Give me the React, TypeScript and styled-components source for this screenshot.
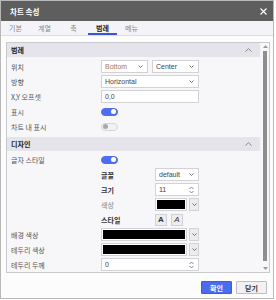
import React from 'react';
import styled, {createGlobalStyle} from 'styled-components';

const GlobalStyle = createGlobalStyle`
  html, body {
    margin: 0;
    padding: 0;
    background: #ffffff;
  }
  body {
    font-family: "Noto Sans CJK KR", "Noto Sans", "Liberation Sans", sans-serif;
    color: #333;
  }
  * {
    box-sizing: border-box;
  }
`;

const Dialog = styled.div`
  width: 274px;
  height: 299px;
  border: 1px solid #b8b8b8;
  background: #fcfcfd;
  display: flex;
  flex-direction: column;
  overflow: hidden;
`;

const TitleBar = styled.div`
  height: 20px;
  flex: none;
  background: #5e5e5e;
  color: #fff;
  display: flex;
  align-items: center;
  justify-content: space-between;
  padding: 0 6px 0 9px;
  font-size: 7.5px;
  font-weight: 700;
`;

const TabBar = styled.div`
  height: 15px;
  flex: none;
  display: flex;
  background: #f4f4f8;
  border-bottom: 1px solid #dcdce2;
`;

const Tab = styled.div<{ $active?: boolean }>`
  width: 29px;
  display: flex;
  align-items: center;
  justify-content: center;
  font-size: 7px;
  color: ${p => (p.$active ? '#222' : '#888')};
  font-weight: ${p => (p.$active ? 700 : 400)};
  border-bottom: 2px solid ${p => (p.$active ? '#3b54d6' : 'transparent')};
  padding-top: 1px;
`;

const Body = styled.div`
  flex: none;
  padding: 6px 0 0 5px;
`;

const Panel = styled.div`
  width: 264px;
  height: 231px;
  border: 1px solid #c9c9ce;
  background: #f7f7fa;
  display: flex;
`;

const ScrollArea = styled.div`
  flex: 1;
  overflow: hidden;
`;

const ScrollBar = styled.div`
  width: 9px;
  flex: none;
  display: flex;
  flex-direction: column;
  align-items: center;
  background: #f7f7fa;
  padding: 2px 0 2px 1px;
`;

const Thumb = styled.div`
  width: 4px;
  flex: 1;
  background: #8e8e8e;
  margin: 3px 0 6px;
`;

const SectionHeader = styled.div`
  height: 14px;
  background: #e4e4ea;
  display: flex;
  align-items: center;
  justify-content: space-between;
  padding: 0 8px 0 4px;
  font-size: 7px;
  font-weight: 700;
  color: #222;
`;

const SectionBody = styled.div<{ $top: number; $bottom: number }>`
  padding: ${p => p.$top}px 0 ${p => p.$bottom}px;
`;

const Row = styled.div`
  height: 15px;
  display: flex;
  align-items: center;
`;

const Label = styled.div<{ $muted?: boolean }>`
  width: 94px;
  flex: none;
  padding-left: 4px;
  font-size: 7px;
  color: ${p => (p.$muted ? '#999' : '#555')};
`;

const SubLabel = styled.div<{ $muted?: boolean }>`
  width: 54px;
  flex: none;
  font-size: 7px;
  font-weight: 700;
  color: ${p => (p.$muted ? '#aaa' : '#333')};
`;

const Controls = styled.div`
  display: flex;
  gap: 4px;
  align-items: center;
`;

const Field = styled.div<{ $w: number; $color?: string }>`
  width: ${p => p.$w}px;
  height: 13px;
  border: 1px solid #d2d2d6;
  background: #fff;
  display: flex;
  align-items: center;
  justify-content: space-between;
  padding: 0 4px 0 3px;
  font-size: 7px;
  color: ${p => p.$color || '#444'};
  font-family: "Liberation Sans", "Noto Sans CJK KR", sans-serif;
`;

const Toggle = styled.div<{ $on?: boolean }>`
  width: 17px;
  height: 8px;
  border-radius: 4px;
  background: ${p => (p.$on ? '#4f6df0' : '#f2f2f4')};
  border: 1px solid ${p => (p.$on ? '#4f6df0' : '#d6d6da')};
  display: flex;
  align-items: center;
  justify-content: ${p => (p.$on ? 'flex-end' : 'flex-start')};
  padding: 0 1px;
`;

const Knob = styled.div<{ $on?: boolean }>`
  width: 5px;
  height: 5px;
  border-radius: 50%;
  background: ${p => (p.$on ? '#fff' : '#a8a8ac')};
`;

const ColorPick = styled.div<{ $w: number }>`
  width: ${p => p.$w}px;
  height: 13px;
  display: flex;
  gap: 2px;
`;

const Swatch = styled.div`
  flex: 1;
  border: 1px solid #d2d2d6;
  background: #fff;
  padding: 1px;

  > div {
    height: 100%;
    background: #000;
  }
`;

const DropBtn = styled.div`
  width: 10px;
  border: 1px solid #d2d2d6;
  background: #ececef;
  display: flex;
  align-items: center;
  justify-content: center;
`;

const StyleBtn = styled.div<{ $italic?: boolean }>`
  width: 12px;
  height: 12px;
  border: 1px solid #d2d2d6;
  background: #ededf0;
  display: flex;
  align-items: center;
  justify-content: center;
  font-family: "Liberation Sans", sans-serif;
  font-size: 8px;
  font-weight: ${p => (p.$italic ? 400 : 700)};
  font-style: ${p => (p.$italic ? 'italic' : 'normal')};
  color: #333;
`;

const Footer = styled.div`
  flex: 1;
  display: flex;
  justify-content: flex-end;
  align-items: flex-start;
  gap: 4px;
  padding: 8px 6px 0 0;
`;

const Button = styled.div<{ $primary?: boolean }>`
  width: 31px;
  height: 13px;
  display: flex;
  align-items: center;
  justify-content: center;
  font-size: 7px;
  font-weight: 700;
  color: ${p => (p.$primary ? '#fff' : '#333')};
  background: ${p => (p.$primary ? '#4a6cf0' : '#f1f1f3')};
  border: 1px solid ${p => (p.$primary ? '#3c5ce0' : '#bdbdc2')};
  border-radius: 1px;
`;

const Chevron = () => (
  <svg width="5" height="3" viewBox="0 0 5 3">
    <path d="M0.5 0.5 L2.5 2.5 L4.5 0.5" fill="none" stroke="#666" strokeWidth="0.9"/>
  </svg>
);

const Spinner = () => (
  <svg width="5" height="8" viewBox="0 0 5 8">
    <path d="M0.5 3 L2.5 1 L4.5 3 M0.5 5 L2.5 7 L4.5 5" fill="none" stroke="#666" strokeWidth="0.8"/>
  </svg>
);

const CollapseIcon = () => (
  <svg width="7" height="4" viewBox="0 0 7 4">
    <path d="M0.5 3.5 L3.5 0.7 L6.5 3.5" fill="none" stroke="#888" strokeWidth="1"/>
  </svg>
);

const CloseIcon = () => (
  <svg width="7" height="7" viewBox="0 0 7 7">
    <path d="M0.5 0.5 L6.5 6.5 M6.5 0.5 L0.5 6.5" stroke="#fff" strokeWidth="1.2"/>
  </svg>
);

const Arrow = ({up}: { up?: boolean }) => (
  <svg width="5" height="3" viewBox="0 0 5 3">
    <path d={up ? 'M0 3 L2.5 0 L5 3 Z' : 'M0 0 L2.5 3 L5 0 Z'} fill="#999"/>
  </svg>
);

const tabs = ['기본', '계열', '축', '범례', '메뉴'];

function ColorField({w}: { w: number }) {
  return (
    <ColorPick $w={w}>
      <Swatch><div/></Swatch>
      <DropBtn><Chevron/></DropBtn>
    </ColorPick>
  );
}

export default function App() {
  return (
    <>
      <GlobalStyle/>
      <Dialog>
        <TitleBar>
          <span>차트 속성</span>
          <CloseIcon/>
        </TitleBar>
        <TabBar>
          {tabs.map(t => <Tab key={t} $active={t === '범례'}>{t}</Tab>)}
        </TabBar>
        <Body>
          <Panel>
            <ScrollArea>
              <SectionHeader>
                <span>범례</span>
                <CollapseIcon/>
              </SectionHeader>
              <SectionBody $top={2} $bottom={3}>
                <Row>
                  <Label>위치</Label>
                  <Controls>
                    <Field $w={47} $color="#a87a48">Bottom<Chevron/></Field>
                    <Field $w={47}>Center<Chevron/></Field>
                  </Controls>
                </Row>
                <Row>
                  <Label>방향</Label>
                  <Field $w={98}>Horizontal<Chevron/></Field>
                </Row>
                <Row>
                  <Label>X,Y 오프셋</Label>
                  <Field $w={98}>0,0</Field>
                </Row>
                <Row>
                  <Label>표시</Label>
                  <Toggle $on><Knob $on/></Toggle>
                </Row>
                <Row>
                  <Label>차트 내 표시</Label>
                  <Toggle><Knob/></Toggle>
                </Row>
              </SectionBody>
              <SectionHeader>
                <span>디자인</span>
                <CollapseIcon/>
              </SectionHeader>
              <SectionBody $top={1} $bottom={0}>
                <Row>
                  <Label>글자 스타일</Label>
                  <Toggle $on><Knob $on/></Toggle>
                </Row>
                <Row>
                  <Label/>
                  <SubLabel>글꼴</SubLabel>
                  <Field $w={44}>default<Chevron/></Field>
                </Row>
                <Row>
                  <Label/>
                  <SubLabel>크기</SubLabel>
                  <Field $w={44}>11<Spinner/></Field>
                </Row>
                <Row>
                  <Label/>
                  <SubLabel $muted>색상</SubLabel>
                  <ColorField w={44}/>
                </Row>
                <Row>
                  <Label/>
                  <SubLabel>스타일</SubLabel>
                  <Controls>
                    <StyleBtn>A</StyleBtn>
                    <StyleBtn $italic>A</StyleBtn>
                  </Controls>
                </Row>
                <Row>
                  <Label>배경 색상</Label>
                  <ColorField w={98}/>
                </Row>
                <Row>
                  <Label>테두리 색상</Label>
                  <ColorField w={98}/>
                </Row>
                <Row>
                  <Label>테두리 두께</Label>
                  <Field $w={98}>0<Spinner/></Field>
                </Row>
              </SectionBody>
            </ScrollArea>
            <ScrollBar>
              <Arrow up/>
              <Thumb/>
              <Arrow/>
            </ScrollBar>
          </Panel>
        </Body>
        <Footer>
          <Button $primary>확인</Button>
          <Button>닫기</Button>
        </Footer>
      </Dialog>
    </>
  );
}
